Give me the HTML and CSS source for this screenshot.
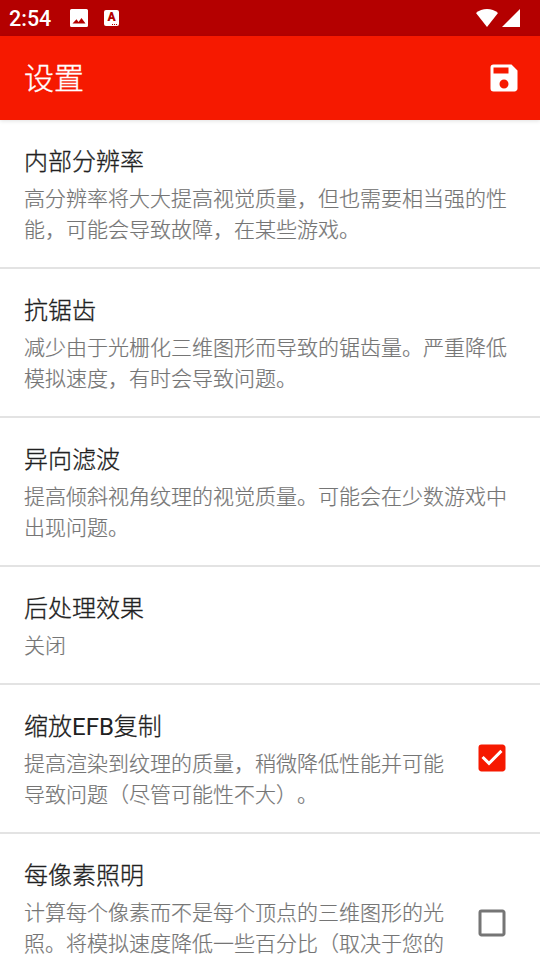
FILE: index.html
```html
<!DOCTYPE html>
<html lang="zh-CN">
<head>
<meta charset="utf-8">
<title>设置</title>
<link rel="stylesheet" href="styles.css">
</head>
<body>
<div class="screen">
  <header class="status">
    <span class="clock">2:54</span>
    <svg class="note-image" viewBox="0 0 18 18"><path fill="#fff" fill-rule="evenodd" d="M1.500 0h15a1.500 1.500 0 0 1 1.500 1.500v15a1.500 1.500 0 0 1-1.500 1.500h-15a1.500 1.500 0 0 1-1.500-1.500v-15a1.500 1.500 0 0 1 1.500-1.500zM2.500 14.500h13l-4-5.500-3 4-2-2.700z"/></svg>
    <span class="note-a">A<i class="dots"></i></span>
    <svg class="wifi" viewBox="0 0 22 18"><path fill="#fff" d="M11 18 0 4C6-1.300 16-1.300 22 4z"/></svg>
    <svg class="signal" viewBox="0 0 18 18"><path fill="#fff" d="M0 18 18 0v18z"/></svg>
  </header>
  <div class="appbar">
    <h1>设置</h1>
    <svg class="save" viewBox="0 0 24 24"><path fill="#fff" d="M17 3H5a2 2 0 0 0-2 2v14a2 2 0 0 0 2 2h14c1.100 0 2-.9 2-2V7l-4-4zm-2 13a3 3 0 1 1-6 0 3 3 0 0 1 6 0zm0-7H5V5h10v4z" fill-rule="evenodd"/></svg>
  </div>
  <main class="list">
    <section class="item"><div class="copy"><h2>内部分辨率</h2><p>高分辨率将大大提高视觉质量，但也需要相当强的性<br>能，可能会导致故障，在某些游戏。</p></div></section>
    <section class="item"><div class="copy"><h2>抗锯齿</h2><p>减少由于光栅化三维图形而导致的锯齿量。严重降低<br>模拟速度，有时会导致问题。</p></div></section>
    <section class="item"><div class="copy"><h2>异向滤波</h2><p>提高倾斜视角纹理的视觉质量。可能会在少数游戏中<br>出现问题。</p></div></section>
    <section class="item"><div class="copy"><h2>后处理效果</h2><p>关闭</p></div></section>
    <section class="item"><div class="copy"><h2>缩放<span class="latin">EFB</span>复制</h2><p>提高渲染到纹理的质量，稍微降低性能并可能<br>导致问题（尽管可能性不大）。</p></div>
      <svg class="check" viewBox="0 0 24 24"><path fill="#f61900" d="M19 3H5a2 2 0 0 0-2 2v14c0 1.100.9 2 2 2h14c1.100 0 2-.9 2-2V5c0-1.100-.9-2-2-2zm-9 14-5-5 1.410-1.410L10 14.170l7.590-7.590L19 8l-9 9z"/></svg></section>
    <section class="item item-last"><div class="copy"><h2>每像素照明</h2><p>计算每个像素而不是每个顶点的三维图形的光<br>照。将模拟速度降低一些百分比（取决于您的</p></div>
      <svg class="check" viewBox="0 0 24 24"><path fill="#757575" d="M19 5v14H5V5h14m0-2H5a2 2 0 0 0-2 2v14c0 1.100.9 2 2 2h14c1.100 0 2-.9 2-2V5c0-1.100-.9-2-2-2z"/></svg></section>
  </main>
</div>
</body>
</html>
```
FILE: styles.css
```css
* { box-sizing: border-box; margin: 0; padding: 0; }
body { font-family: Roboto, "Noto Sans CJK SC", sans-serif; background: #fff; overflow: hidden; text-spacing-trim: space-all; }
svg { display: block; flex: none; }
.screen { height: 960px; overflow: hidden; display: flex; flex-direction: column; }
.status { height: 36px; flex: none; background: #b40000; display: flex; align-items: center; padding: 0 20px 0 9px; color: #fff; }
.clock { font-size: 21.500px; font-weight: 500; width: 60.500px; line-height: 36px; padding-top: 1px; }
.note-image { width: 18px; height: 18px; }
.note-a { position: relative; margin-left: 16.500px; width: 15px; height: 16px; border-radius: 2px; background: #fff; color: #b40000; font-size: 12px; font-weight: 900; line-height: 15px; text-align: center; }
.dots { position: absolute; right: 1px; bottom: 1px; width: 6px; height: 1px; background: repeating-linear-gradient(90deg, #b40000 0 1px, #fff 1px 2px); }
.wifi { width: 22px; height: 18px; margin-left: auto; }
.signal { width: 18px; height: 18px; margin-left: 4px; }
.appbar { height: 84px; flex: none; background: #f61900; display: flex; align-items: center; justify-content: space-between; padding: 0 18px 0 24px; color: #fff; box-shadow: 0 1px 4px rgba(0, 0, 0, .12); }
.appbar h1 { font-size: 30px; font-weight: 300; line-height: 40px; padding-top: 2px; -webkit-text-stroke: .35px currentColor; }
.save { width: 36px; height: 36px; }
.list { flex: none; }
.item { display: flex; align-items: flex-start; justify-content: space-between; padding: 25px 30px 21px 24px; border-bottom: 2px solid #e3e3e3; }
.item-last { padding-bottom: 0; border-bottom: 0; }
.copy { white-space: nowrap; }
.item h2 { font-size: 24px; font-weight: 300; line-height: 35px; color: #212121; -webkit-text-stroke: .3px currentColor; }
.item .latin { font-weight: 400; -webkit-text-stroke: 0; }
.item p { margin-top: 4px; font-size: 21px; font-weight: 300; line-height: 31px; color: #757575; -webkit-text-stroke: .2px currentColor; }
.check { width: 36px; height: 36px; margin-top: 30px; }
.item-last .check { margin-top: 46px; }
```
